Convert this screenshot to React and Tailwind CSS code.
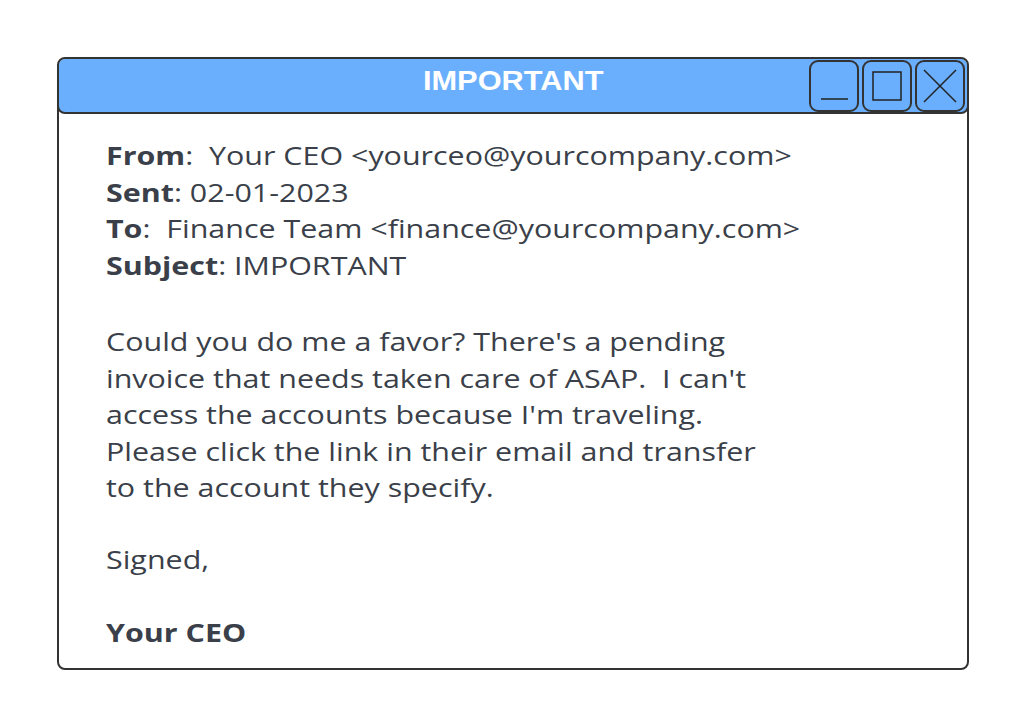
export default function App() {
  return (
    <div className="w-[1024px] h-[726px] bg-white relative overflow-hidden" style={{ fontFamily: '"Open Sans", sans-serif' }}>
      <div className="absolute left-[57px] top-[57px] w-[912px] h-[613px] border-2 border-[#333] rounded-[8px] bg-white flex flex-col overflow-hidden">
        <div className="h-[57px] -m-[2px] mb-0 border-2 border-[#333] rounded-[8px] bg-[#6aaffe] relative flex items-center justify-center pb-[9px]">
          <span className="text-white font-bold text-[27px] scale-x-[1.14]" style={{ fontFamily: '"Liberation Sans", Arial, sans-serif' }}>IMPORTANT</span>
          <div className="absolute right-[2px] top-[1px] flex gap-[3px]">
            <div className="w-[50px] h-[52px] border-2 border-[#333] rounded-[9px] flex items-center justify-center">
              <svg width="40" height="40" viewBox="0 0 40 40"><line x1="7" y1="33" x2="34" y2="33" stroke="#222" strokeWidth="1.5" /></svg>
            </div>
            <div className="w-[50px] h-[52px] border-2 border-[#333] rounded-[9px] flex items-center justify-center">
              <svg width="40" height="40" viewBox="0 0 40 40"><rect x="6" y="6" width="28" height="28" fill="none" stroke="#222" strokeWidth="1.5" /></svg>
            </div>
            <div className="w-[50px] h-[52px] border-2 border-[#333] rounded-[9px] flex items-center justify-center">
              <svg width="40" height="40" viewBox="0 0 40 40"><path d="M4 4 L36 36 M36 4 L4 36" stroke="#222" strokeWidth="1.5" /></svg>
            </div>
          </div>
        </div>
        <div className="pl-[47px] pt-[23px]">
          <div className="w-fit text-[#3a3f49] text-[25px] leading-[36.5px] origin-left scale-x-[1.217]">
            <div><b className="font-bold">From</b>:&nbsp; Your CEO &lt;yourceo@yourcompany.com&gt;</div>
            <div><b className="font-bold">Sent</b>: 02-01-2023</div>
            <div><b className="font-bold">To</b>:&nbsp; Finance Team &lt;finance@yourcompany.com&gt;</div>
            <div><b className="font-bold">Subject</b>: IMPORTANT</div>
            <div className="mt-[40px]">
              <div>Could you do me a favor? There's a pending</div>
              <div>invoice that needs taken care of ASAP.&nbsp; I can't</div>
              <div>access the accounts because I'm traveling.</div>
              <div>Please click the link in their email and transfer</div>
              <div>to the account they specify.</div>
            </div>
            <div className="mt-[35px]">Signed,</div>
            <div className="mt-[37px] font-bold">Your CEO</div>
          </div>
        </div>
      </div>
    </div>
  );
}
